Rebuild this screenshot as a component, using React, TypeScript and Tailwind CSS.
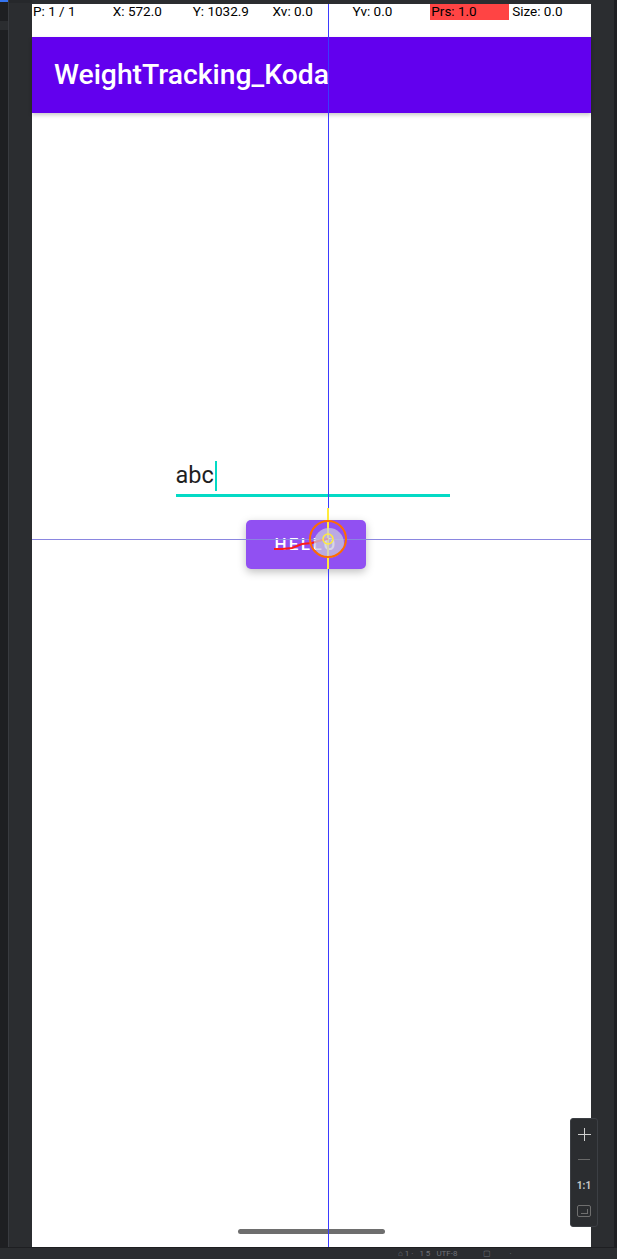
import React from "react";

const cols = [
  { t: "P: 1 / 1" },
  { t: "X: 572.0" },
  { t: "Y: 1032.9" },
  { t: "Xv: 0.0" },
  { t: "Yv: 0.0" },
  { t: "Prs: 1.0", red: true },
  { t: "Size: 0.0" },
];

export default function App() {
  return (
    <div
      className="w-[617px] h-[1259px] bg-[#2b2d30] flex flex-col overflow-hidden relative"
      style={{ fontFamily: "Roboto, 'Noto Sans', sans-serif" }}
    >
      <div className="flex flex-1 min-h-0">
        {/* left ide strip */}
        <div className="w-[9px] bg-[#1e1f22] border-r border-[#393b40] flex flex-col">
          <div className="h-[2px] bg-[#3574f0] w-full" />
          <div className="h-[19px]" />
          <div className="h-[9px] bg-[#2b2d30] w-full" />
        </div>
        <div className="w-[23px] bg-[#2b2d30] border-t-[3px] border-[#26282b]" />
        {/* phone screen */}
        <div className="w-[559px] mt-[4px] flex flex-col bg-white relative">
          {/* pointer info bar */}
          <div className="h-[33px] flex text-[13.5px] text-black leading-none">
            {cols.map((c, i) => (
              <div key={i} className="w-[80px] h-[16px] flex items-start">
                <span
                  className={
                    c.red
                      ? "bg-[#ff4444] w-[79px] h-[16px] pt-[1px] pl-[1px] -ml-[1px]"
                      : "pt-[1px] pl-[1px]"
                  }
                >
                  {c.t}
                </span>
              </div>
            ))}
          </div>
          {/* toolbar */}
          <div className="h-[76px] bg-[#6200ee] flex items-center pl-[22px] shadow-[0_2px_4px_rgba(0,0,0,0.22)] relative z-10">
            <span className="text-white text-[28.3px] font-medium leading-none mt-[1px]">
              WeightTracking_Koda
            </span>
          </div>
          {/* content */}
          <div className="flex-1 flex flex-col items-center pt-[344px]">
            <div className="w-[274px] ml-[2px] flex flex-col">
              <div className="h-[35px] flex items-end text-[23.5px] text-[#1f1f1f] leading-none pb-[5px]">
                <span>abc</span>
                <span className="w-[2px] h-[30px] bg-[#03dac5] ml-[1px] mb-[-4px]" />
              </div>
              <div className="h-[3px] bg-[#03dac5] mt-[2px]" />
            </div>
            <div className="mt-[23px] w-[120px] h-[49px] rounded-[5px] bg-[#9150f2] shadow-[0_3px_8px_rgba(0,0,0,0.25)] flex items-center justify-center text-white text-[17px] font-medium tracking-[2.4px] mr-[11px]">
              HELLO
            </div>
          </div>
          {/* nav handle */}
          <div className="absolute left-[206px] top-[1225px] w-[147px] h-[5px] rounded-full bg-[#6e6e6e]" />
          {/* pointer crosshair overlays */}
          <div className="absolute left-[296px] top-0 bottom-0 w-px bg-[#3b3bff] z-20" />
          <div className="absolute left-0 right-0 top-[535px] h-px bg-[#8a86e0] z-20" />
          <div className="absolute left-[295px] top-[504px] w-[2px] h-[61px] bg-[#ffeb3b] z-30" />
          <svg
            className="absolute left-[230px] top-[500px] z-30"
            width="100"
            height="80"
            viewBox="0 0 100 80"
          >
            <polyline
              points="12,45 20,45 30,44 40,40 50,39 60,36 66,35"
              fill="none"
              stroke="#ff1a1a"
              strokeWidth="2"
            />
            <circle cx="67" cy="39" r="15" fill="rgba(200,200,220,0.75)" />
            <circle cx="66" cy="35" r="18" fill="none" stroke="#ff6d00" strokeWidth="2" />
            <circle cx="66" cy="35" r="5" fill="none" stroke="#ffeb3b" strokeWidth="1.5" />
          </svg>
        </div>
        {/* right side */}
        <div className="flex-1 bg-[#2b2d30] border-r-[3px] border-[#1e1f22] relative">
          <div className="absolute left-[-21px] top-[1118px] w-[28px] h-[109px] rounded-[3px] bg-[#2b2d30] border border-[#3c3f44] flex flex-col items-center text-[#c8c8c8]">
            <div className="mt-[9px] w-[13px] h-[13px] relative">
              <div className="absolute left-0 right-0 top-[6px] h-px bg-[#d0d0d0]" />
              <div className="absolute top-0 bottom-0 left-[6px] w-px bg-[#d0d0d0]" />
            </div>
            <div className="mt-[18px] w-[12px] h-px bg-[#6a6a6a]" />
            <span className="mt-[21px] text-[10px] font-bold leading-none">1:1</span>
            <div className="mt-[14px] w-[14px] h-[12px] border border-[#6f6f6f] rounded-[2px] flex items-end justify-center">
              <div className="w-[7px] h-[5px] border-r border-b border-[#6f6f6f] mb-[2px]" />
            </div>
          </div>
        </div>
      </div>
      {/* bottom bar */}
      <div className="h-[12px] bg-[#2b2d30] border-t border-[#1e1f22] flex items-center text-[8px] text-[#6f737a] leading-none overflow-hidden pl-[398px] gap-[6px]">
        <span>⌂ 1 ·</span>
        <span>1 5</span>
        <span>UTF-8</span>
        <span className="ml-[20px]">▢</span>
        <span className="ml-[12px]">·</span>
      </div>
    </div>
  );
}
